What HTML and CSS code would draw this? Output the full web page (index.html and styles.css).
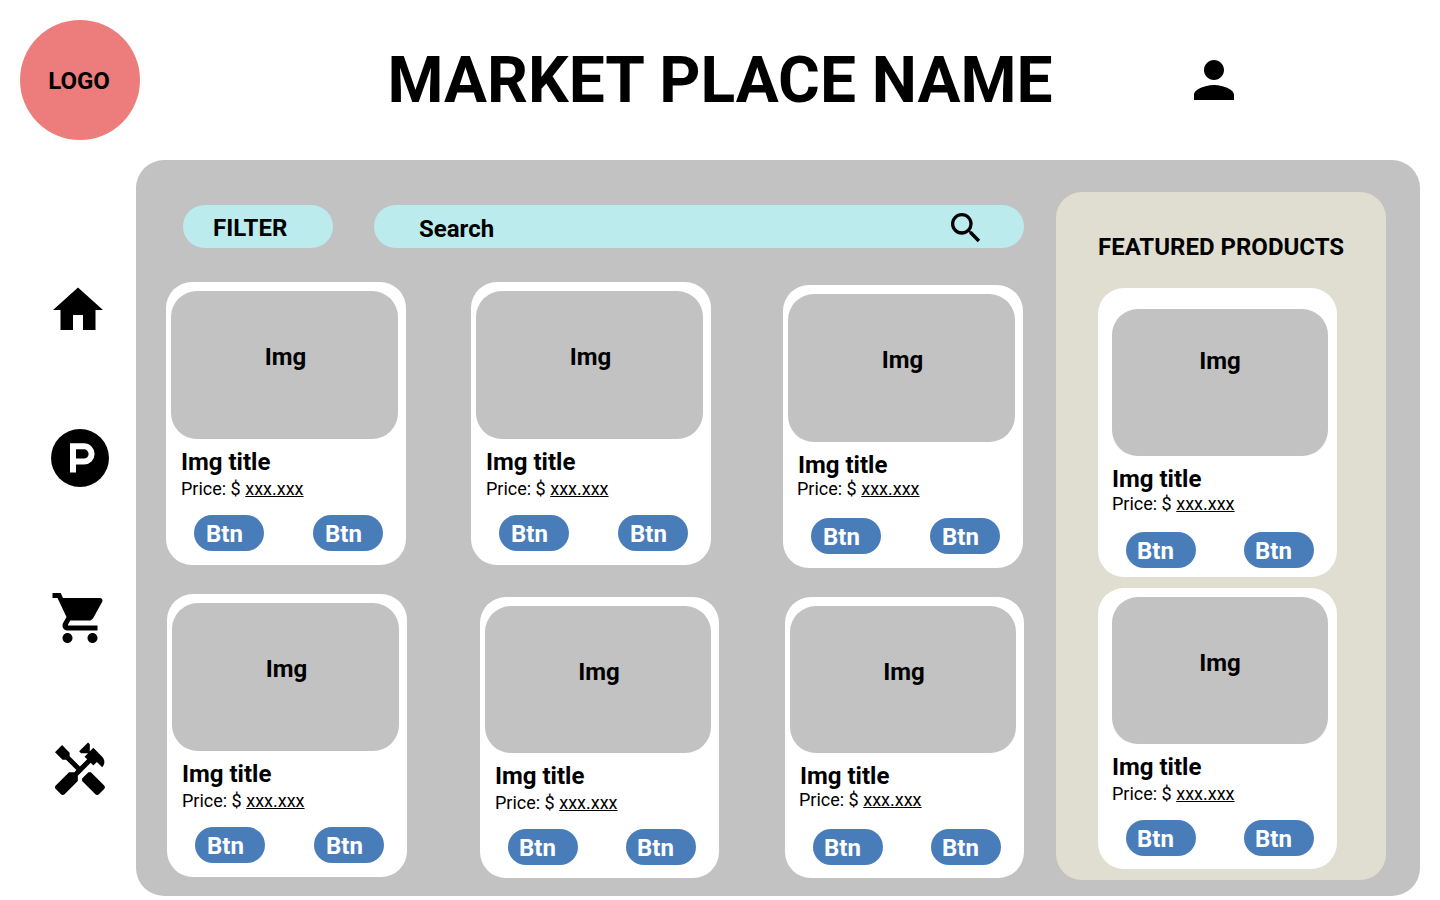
FILE: index.html
```html
<!DOCTYPE html>
<html lang="en">
<head>
<meta charset="utf-8">
<meta name="viewport" content="width=device-width, initial-scale=1">
<title>Market Place Name</title>
<link rel="stylesheet" href="styles.css">
</head>
<body>
<header class="header">
  <a class="logo" href="#">LOGO</a>
  <h1 class="site-title">MARKET PLACE NAME</h1>
  <a class="account" href="#" aria-label="Account">
    <svg class="icon" viewBox="0 0 24 24"><path d="M12 12c2.21 0 4-1.79 4-4s-1.79-4-4-4-4 1.79-4 4 1.79 4 4 4zm0 2c-2.67 0-8 1.34-8 4v2h16v-2c0-2.66-5.33-4-8-4z"/></svg>
  </a>
</header>
<div class="layout">
  <nav class="nav" aria-label="Main">
    <a class="nav-link" href="#" aria-label="Home">
      <svg class="icon" viewBox="0 0 24 24"><path d="M9.200 20v-6h4v6h5v-8h3L11.200 3 1.200 12h3v8z"/></svg>
    </a>
    <a class="nav-link" href="#" aria-label="Products">
      <svg class="icon" viewBox="0 0 60 60"><circle cx="30" cy="30" r="29"/><path d="M23 44.500V18.300H34a7.600 7.600 0 0 1 0 15.200H23" fill="none" stroke="#fff" stroke-width="6"/></svg>
    </a>
    <a class="nav-link" href="#" aria-label="Cart">
      <svg class="icon" viewBox="0 0 24 24"><path d="M7 18c-1.100 0-1.990.9-1.990 2S5.900 22 7 22s2-.9 2-2-.9-2-2-2zM1 2v2h2l3.600 7.590-1.350 2.450c-.16.28-.25.61-.25.96 0 1.100.9 2 2 2h12v-2H7.420c-.14 0-.25-.11-.25-.25l.03-.12.900-1.630h7.450c.75 0 1.410-.41 1.750-1.030l3.580-6.490c.08-.14.12-.31.12-.48 0-.55-.45-1-1-1H5.210l-.94-2H1zm16 16c-1.100 0-1.990.9-1.990 2s.89 2 1.990 2 2-.9 2-2-.9-2-2-2z"/></svg>
    </a>
    <a class="nav-link" href="#" aria-label="Tools">
      <svg class="icon" viewBox="0 0 24 24"><path d="M21.670 18.170l-5.300-5.300h-.99l-2.540 2.540v.99l5.300 5.300c.39.39 1.020.39 1.410 0l2.120-2.120a.996.996 0 0 0 0-1.410z"/><path d="M17.340 10.190l1.410-1.410 2.120 2.120c1.170-1.170 1.170-3.070 0-4.240l-3.540-3.540-1.410 1.410V1.710L15.220 1l-3.540 3.540.71.71h2.830l-1.410 1.410 1.060 1.060-2.890 2.890-4.130-4.130V5.060L4.830 2.040 2 4.870 5.030 7.900h1.410l4.130 4.130-.85.85H7.600l-5.300 5.300a.996.996 0 0 0 0 1.410l2.120 2.120c.39.39 1.020.39 1.410 0l5.300-5.300v-2.120l5.150-5.150 1.060 1.050z"/></svg>
    </a>
  </nav>
  <main class="panel">
    <section class="catalog" aria-label="Products">
      <div class="toolbar">
        <button class="filter" type="button">FILTER</button>
        <form class="search" role="search">
          <input class="search-input" type="search" placeholder="Search" aria-label="Search">
          <button class="search-button" type="submit" aria-label="Submit search">
            <svg class="icon" viewBox="0 0 24 24"><path d="M15.500 14h-.79l-.28-.27A6.471 6.471 0 0 0 16 9.500 6.500 6.500 0 1 0 9.500 16c1.610 0 3.090-.59 4.230-1.570l.27.28v.79l5 4.990L20.490 19l-4.990-5zm-6 0C7.010 14 5 11.990 5 9.500S7.010 5 9.500 5 14 7.010 14 9.500 11.990 14 9.500 14z"/></svg>
          </button>
        </form>
      </div>
      <div class="row row-first">
        <article class="card">
          <div class="thumb">Img</div>
          <h2 class="card-title">Img title</h2>
          <p class="price">Price: $ <span class="amount">xxx.xxx</span></p>
          <div class="actions"><button class="btn" type="button">Btn</button><button class="btn" type="button">Btn</button></div>
        </article>
        <article class="card">
          <div class="thumb">Img</div>
          <h2 class="card-title">Img title</h2>
          <p class="price">Price: $ <span class="amount">xxx.xxx</span></p>
          <div class="actions"><button class="btn" type="button">Btn</button><button class="btn" type="button">Btn</button></div>
        </article>
        <article class="card card-low card-tight">
          <div class="thumb">Img</div>
          <h2 class="card-title">Img title</h2>
          <p class="price">Price: $ <span class="amount">xxx.xxx</span></p>
          <div class="actions"><button class="btn" type="button">Btn</button><button class="btn" type="button">Btn</button></div>
        </article>
      </div>
      <div class="row row-second">
        <article class="card">
          <div class="thumb">Img</div>
          <h2 class="card-title">Img title</h2>
          <p class="price">Price: $ <span class="amount">xxx.xxx</span></p>
          <div class="actions"><button class="btn" type="button">Btn</button><button class="btn" type="button">Btn</button></div>
        </article>
        <article class="card card-low card-short">
          <div class="thumb">Img</div>
          <h2 class="card-title">Img title</h2>
          <p class="price">Price: $ <span class="amount">xxx.xxx</span></p>
          <div class="actions"><button class="btn" type="button">Btn</button><button class="btn" type="button">Btn</button></div>
        </article>
        <article class="card card-low card-short card-tight">
          <div class="thumb">Img</div>
          <h2 class="card-title">Img title</h2>
          <p class="price">Price: $ <span class="amount">xxx.xxx</span></p>
          <div class="actions"><button class="btn" type="button">Btn</button><button class="btn" type="button">Btn</button></div>
        </article>
      </div>
    </section>
    <aside class="featured">
      <h2 class="featured-title">FEATURED PRODUCTS</h2>
      <div class="featured-list">
        <article class="card card-short card-featured card-lead">
          <div class="thumb">Img</div>
          <h3 class="card-title">Img title</h3>
          <p class="price">Price: $ <span class="amount">xxx.xxx</span></p>
          <div class="actions"><button class="btn" type="button">Btn</button><button class="btn" type="button">Btn</button></div>
        </article>
        <article class="card card-short card-featured">
          <div class="thumb">Img</div>
          <h3 class="card-title">Img title</h3>
          <p class="price">Price: $ <span class="amount">xxx.xxx</span></p>
          <div class="actions"><button class="btn" type="button">Btn</button><button class="btn" type="button">Btn</button></div>
        </article>
      </div>
    </aside>
  </main>
</div>
</body>
</html>
```
FILE: styles.css
```css
* {
  box-sizing: border-box;
}

body {
  margin: 0;
  background: #fff;
  color: #000;
  font-family: Roboto, "Liberation Sans", sans-serif;
  font-size: 24px;
  font-weight: 700;
  line-height: 28px;
}

h1, h2, h3, p {
  margin: 0;
  font-size: inherit;
}

a {
  color: inherit;
  text-decoration: none;
}

button, input {
  border: 0;
  background: none;
  color: inherit;
  font: inherit;
}

button {
  cursor: pointer;
}

.icon {
  display: block;
  width: 100%;
  height: 100%;
  fill: currentColor;
}

.header {
  display: grid;
  grid-template-columns: 1fr auto 1fr;
  align-items: center;
  padding: 20px;
}

.logo {
  display: flex;
  align-items: center;
  justify-content: center;
  width: 120px;
  height: 120px;
  padding: 2px 2px 0 0;
  border-radius: 50%;
  background: #ed7c7c;
}

.site-title {
  padding-top: 2px;
  font-size: 64px;
  line-height: 76px;
}

.account {
  width: 60px;
  height: 60px;
  margin-left: 131px;
}

.layout {
  display: flex;
  padding: 0 20px 4px 0;
}

.nav {
  flex: none;
  display: grid;
  grid-template-rows: 148px 160px 152px 60px;
  align-content: start;
  width: 136px;
  padding: 120px 0 0 50px;
}

.nav-link {
  width: 60px;
  height: 60px;
}

.panel {
  flex: 1;
  display: flex;
  gap: 32px;
  min-width: 0;
  padding: 32px 34px 16px 30px;
  border-radius: 28px;
  background: #c2c2c2;
}

.catalog {
  flex: 1;
  min-width: 0;
  padding-top: 13px;
}

.toolbar {
  display: flex;
  gap: 41px;
  margin-bottom: 34px;
  padding-left: 17px;
}

.filter {
  width: 150px;
  height: 43px;
  padding: 2px 0 0 30px;
  border-radius: 22px;
  background: #bbebed;
  text-align: left;
}

.search {
  flex: 1;
  display: flex;
  align-items: center;
  min-width: 0;
  height: 43px;
  padding: 2px 38px 0 45px;
  border-radius: 22px;
  background: #bbebed;
}

.search-input {
  flex: 1;
  min-width: 0;
  height: 40px;
  padding: 2px 0 0;
  outline: 0;
}

.search-input::placeholder {
  color: #000;
  opacity: 1;
}

.search-button {
  width: 40px;
  height: 40px;
  padding: 0;
}

.row {
  display: grid;
  align-items: start;
}

.row-first {
  grid-template-columns: 305fr 312fr 241fr;
  margin-bottom: 26px;
}

.row-second {
  grid-template-columns: 313fr 305fr 239fr;
  padding-left: 1px;
}

.card {
  width: 100%;
  max-width: 240px;
  padding: 9px 8px 14px 5px;
  border-radius: 26px;
  background: #fff;
}

.card-low {
  margin-top: 3px;
}

.thumb {
  height: 148px;
  margin-bottom: 9px;
  padding: 52px 0 0 2px;
  border-radius: 26px;
  background: #c2c2c2;
  text-align: center;
}

.card-title {
  margin-bottom: 2px;
  padding-left: 10px;
}

.price {
  margin-bottom: 16px;
  padding-left: 10px;
  font-size: 18px;
  font-weight: 400;
  line-height: 21px;
}

.amount {
  text-decoration: underline;
}

.actions {
  display: flex;
  gap: 49px;
  padding-left: 23px;
}

.btn {
  width: 70px;
  height: 36px;
  padding: 2px 0 0 12px;
  border-radius: 18px;
  background: #497dba;
  color: #fff;
  text-align: left;
}

.card-tight .card-title {
  margin-bottom: -1px;
}

.card-tight .price {
  margin-bottom: 19px;
  padding-left: 9px;
}

.card-short {
  max-width: 239px;
  padding-bottom: 13px;
}

.card-short .thumb {
  height: 147px;
}

.card-short .actions {
  gap: 48px;
}

.card-short .btn {
  padding-left: 11px;
}

.featured {
  flex: none;
  width: 330px;
  padding: 41px 42px 11px;
  border-radius: 26px;
  background: #dfded0;
}

.featured-title {
  margin-bottom: 27px;
  white-space: nowrap;
}

.featured-list {
  display: grid;
  gap: 11px;
}

.card-featured {
  padding-left: 14px;
  padding-right: 9px;
}

.card-featured .thumb {
  padding-left: 0;
}

.card-featured .card-title,
.card-featured .price {
  padding-left: 0;
}

.card-featured .actions {
  padding-left: 14px;
}

.card-lead {
  padding-top: 21px;
  padding-bottom: 9px;
}

.card-lead .thumb {
  padding-top: 38px;
}

.card-lead .card-title {
  margin-bottom: 0;
}

.card-lead .price {
  margin-bottom: 18px;
}
```
